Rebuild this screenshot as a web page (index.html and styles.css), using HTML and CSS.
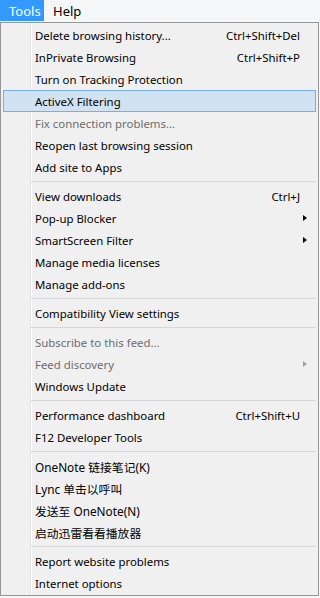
FILE: index.html
```html
<!DOCTYPE html>
<html>
<head>
<meta charset="utf-8">
<link rel="stylesheet" href="styles.css">
</head>
<body>
<div class="menubar">
  <span class="mb-item active">Tools</span>
  <span class="mb-item">Help</span>
</div>
<div class="menu">
  <div class="item"><span class="label">Delete browsing history...</span><span class="key">Ctrl+Shift+Del</span></div>
  <div class="item"><span class="label">InPrivate Browsing</span><span class="key">Ctrl+Shift+P</span></div>
  <div class="item"><span class="label">Turn on Tracking Protection</span></div>
  <div class="item hover"><span class="label">ActiveX Filtering</span></div>
  <div class="item disabled"><span class="label">Fix connection problems...</span></div>
  <div class="item"><span class="label">Reopen last browsing session</span></div>
  <div class="item"><span class="label">Add site to Apps</span></div>
  <div class="sep"></div>
  <div class="item"><span class="label">View downloads</span><span class="key">Ctrl+J</span></div>
  <div class="item"><span class="label">Pop-up Blocker</span><span class="arrow"></span></div>
  <div class="item"><span class="label">SmartScreen Filter</span><span class="arrow"></span></div>
  <div class="item"><span class="label">Manage media licenses</span></div>
  <div class="item"><span class="label">Manage add-ons</span></div>
  <div class="sep"></div>
  <div class="item"><span class="label">Compatibility View settings</span></div>
  <div class="sep"></div>
  <div class="item disabled"><span class="label">Subscribe to this feed...</span></div>
  <div class="item disabled"><span class="label">Feed discovery</span><span class="arrow"></span></div>
  <div class="item"><span class="label">Windows Update</span></div>
  <div class="sep"></div>
  <div class="item"><span class="label">Performance dashboard</span><span class="key">Ctrl+Shift+U</span></div>
  <div class="item"><span class="label">F12 Developer Tools</span></div>
  <div class="sep"></div>
  <div class="item cjk"><span class="label">OneNote 链接笔记(K)</span></div>
  <div class="item cjk"><span class="label">Lync 单击以呼叫</span></div>
  <div class="item cjk"><span class="label">发送至 OneNote(N)</span></div>
  <div class="item cjk"><span class="label">启动迅雷看看播放器</span></div>
  <div class="sep"></div>
  <div class="item"><span class="label">Report website problems</span></div>
  <div class="item"><span class="label">Internet options</span></div>
</div>
</body>
</html>
```
FILE: styles.css
```css
html, body {
  margin: 0;
  padding: 0;
  background: #f5f6f7;
  font-family: "Noto Sans", "Noto Sans CJK SC", sans-serif;
  font-size: 11.4px;
  color: #000;
}
.menubar {
  display: flex;
  height: 22px;
  background: #f5f6f7;
}
.mb-item {
  display: flex;
  align-items: center;
  padding: 0 7px 0 9px;
  height: 21px;
  font-size: 13px;
}
.mb-item.active {
  background: #3399ff;
  color: #fff;
  width: 28px;
}
.menu {
  width: 317px;
  border: 1px solid #979797;
  background: #f0f0f0;
  padding: 1px 0 1px 0;
  background-image: linear-gradient(#e2e3e3, #e2e3e3), linear-gradient(#ffffff, #ffffff);
  background-size: 1px 100%, 1px 100%;
  background-position: 29px 0, 30px 0;
  background-repeat: no-repeat;
}
.item {
  display: flex;
  align-items: center;
  height: 22px;
  margin: 0 2px;
  padding: 0 12px 0 32px;
  box-sizing: border-box;
}
.item.cjk {
  font-size: 11.8px;
}
.item .label {
  flex: 1;
  white-space: nowrap;
}
.item .key {
  white-space: nowrap;
  margin-right: 4px;
}
.item.hover {
  background: #d1e2f2;
  border: 1px solid #78aee5;
  padding-left: 31px;
  padding-right: 11px;
}
.item.disabled {
  color: #6d6d6d;
}
.arrow {
  width: 0;
  height: 0;
  border-top: 3.5px solid transparent;
  border-bottom: 3.5px solid transparent;
  border-left: 4px solid #000;
  margin-right: -3px;
}
.item.disabled .arrow {
  border-left-color: #a0a0a0;
}
.sep {
  height: 7px;
  margin-left: 30px;
  margin-right: 2px;
  background: linear-gradient(#d7d7d7, #d7d7d7) no-repeat 0 3px / 100% 1px;
}
```
